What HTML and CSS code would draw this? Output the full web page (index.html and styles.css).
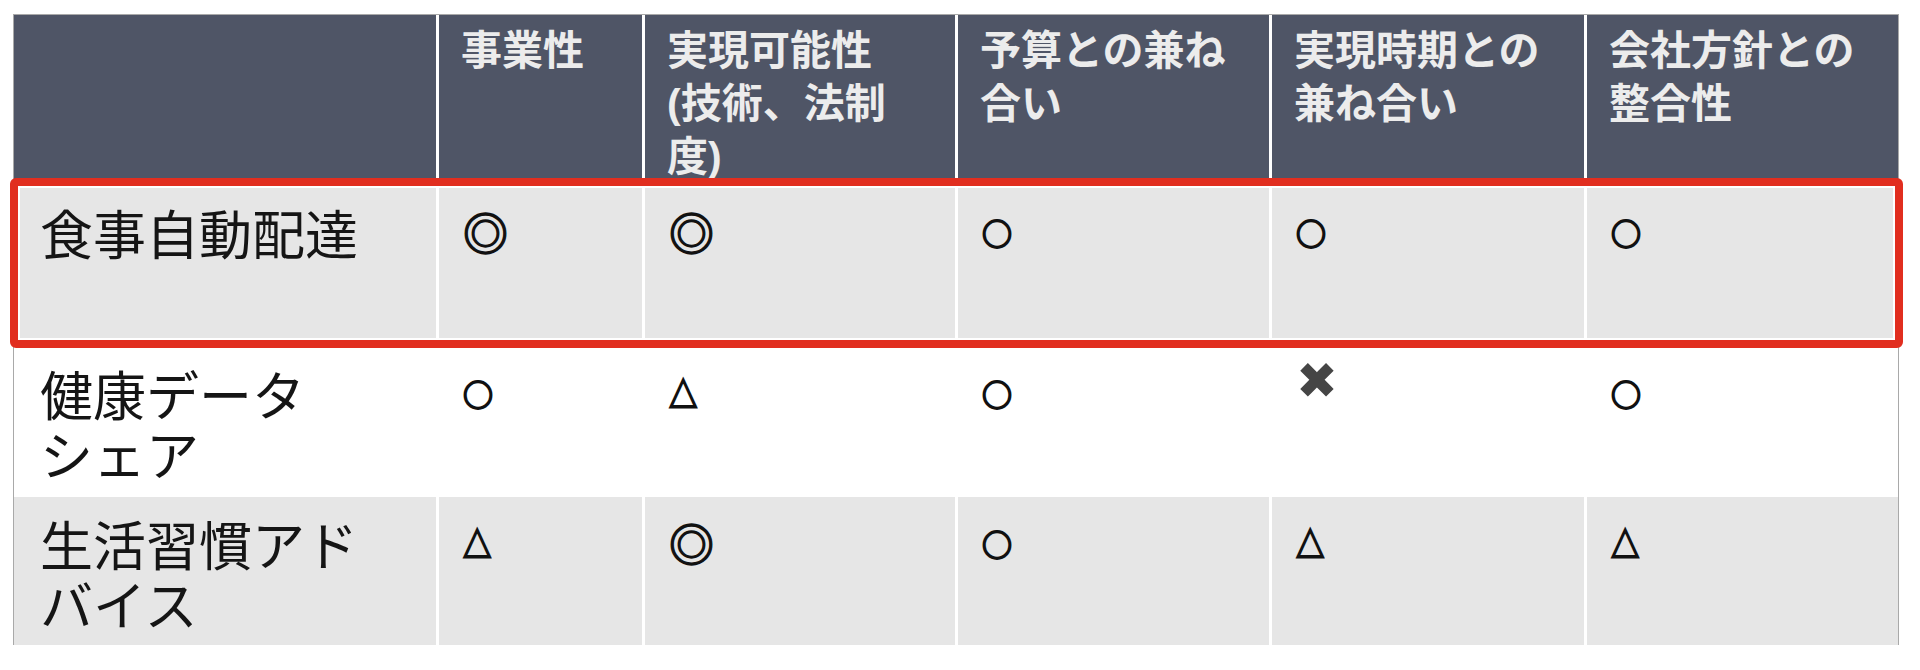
FILE: index.html
```html
<!DOCTYPE html>
<html lang="ja">
<head>
<meta charset="utf-8">
<title>評価表</title>
<link rel="stylesheet" href="styles.css">
</head>
<body>
<div class="table">
  <div class="row head">
    <div class="cell"></div>
    <div class="cell">事業性</div>
    <div class="cell">実現可能性<br>(技術、法制<br>度)</div>
    <div class="cell">予算との兼ね合い</div>
    <div class="cell">実現時期との兼ね合い</div>
    <div class="cell">会社方針との整合性</div>
  </div>
  <div class="row body r1 highlight">
    <div class="cell name"><span class="line">食事自動配達</span></div>
    <div class="cell"><span class="sym dbl">◎</span></div>
    <div class="cell"><span class="sym dbl">◎</span></div>
    <div class="cell"><span class="sym ok">○</span></div>
    <div class="cell"><span class="sym ok">○</span></div>
    <div class="cell"><span class="sym ok">○</span></div>
  </div>
  <div class="row body r2">
    <div class="cell name"><span class="line">健康データ</span><span class="line">シェア</span></div>
    <div class="cell"><span class="sym ok">○</span></div>
    <div class="cell"><span class="sym tri">△</span></div>
    <div class="cell"><span class="sym ok">○</span></div>
    <div class="cell"><span class="sym ng">✖</span></div>
    <div class="cell"><span class="sym ok">○</span></div>
  </div>
  <div class="row body r3">
    <div class="cell name"><span class="line">生活習慣アド</span><span class="line">バイス</span></div>
    <div class="cell"><span class="sym tri">△</span></div>
    <div class="cell"><span class="sym dbl">◎</span></div>
    <div class="cell"><span class="sym ok">○</span></div>
    <div class="cell"><span class="sym tri">△</span></div>
    <div class="cell"><span class="sym tri">△</span></div>
  </div>
</div>
</body>
</html>
```
FILE: styles.css
```css
html, body {
  margin: 0;
  padding: 0;
  background: #ffffff;
}

body {
  width: 1920px;
  height: 670px;
  overflow: hidden;
  font-family: "Liberation Sans", "Noto Sans CJK JP", sans-serif;
}

.table {
  margin: 14px 0 0 13px;
  width: 1884px;
  border: 1px solid #a9a9a9;
  border-bottom: none;
  background: #ffffff;
}

.row {
  display: grid;
  grid-template-columns: 422px 203px 310px 311px 312px 311px;
  column-gap: 3px;
}

.head {
  height: 164px;
}

.head .cell {
  background: #4f5566;
  color: #ececec;
  font-weight: 700;
  font-size: 41px;
  line-height: 53px;
  padding: 10px 36px 0 22px;
}

.body .cell {
  color: #151515;
  font-size: 53px;
  line-height: 60px;
  padding: 22px 10px 0 24px;
}

.body .cell.name {
  padding-left: 26px;
}

.line {
  display: block;
  height: 60px;
}

.r1 {
  height: 167px;
}

.r1 .cell {
  padding-top: 28px;
  background: #e6e6e6;
}

.r2 {
  height: 151px;
}

.r2 .cell {
  background: #ffffff;
}

.r3 {
  height: 148px;
}

.r3 .cell {
  padding-top: 21px;
  background: #e6e6e6;
}

.highlight {
  position: relative;
}

.highlight::after {
  content: "";
  position: absolute;
  top: -1px;
  left: -4px;
  right: -5px;
  bottom: -2px;
  border: 8px solid #e12e1f;
  border-radius: 6px;
  box-shadow: inset 0 0 0 2px #ffffff;
  pointer-events: none;
}

.sym {
  display: inline-flex;
  align-items: center;
  height: 60px;
  vertical-align: top;
  color: #111111;
  font-family: "Noto Sans CJK JP", sans-serif;
  font-weight: 700;
  -webkit-text-stroke: 1.8px #111111;
  position: relative;
  top: -5px;
}

.sym.dbl {
  font-size: 45px;
  -webkit-text-stroke: 1.3px #111111;
}

.sym.ok {
  font-size: 30px;
}

.sym.tri {
  font-size: 33px;
  transform: scale(0.86, 1.08);
  transform-origin: left center;
}

.sym.ng {
  font-family: "DejaVu Sans", sans-serif;
  font-size: 50px;
  color: #454545;
  -webkit-text-stroke: 0;
  top: -17px;
}
```
